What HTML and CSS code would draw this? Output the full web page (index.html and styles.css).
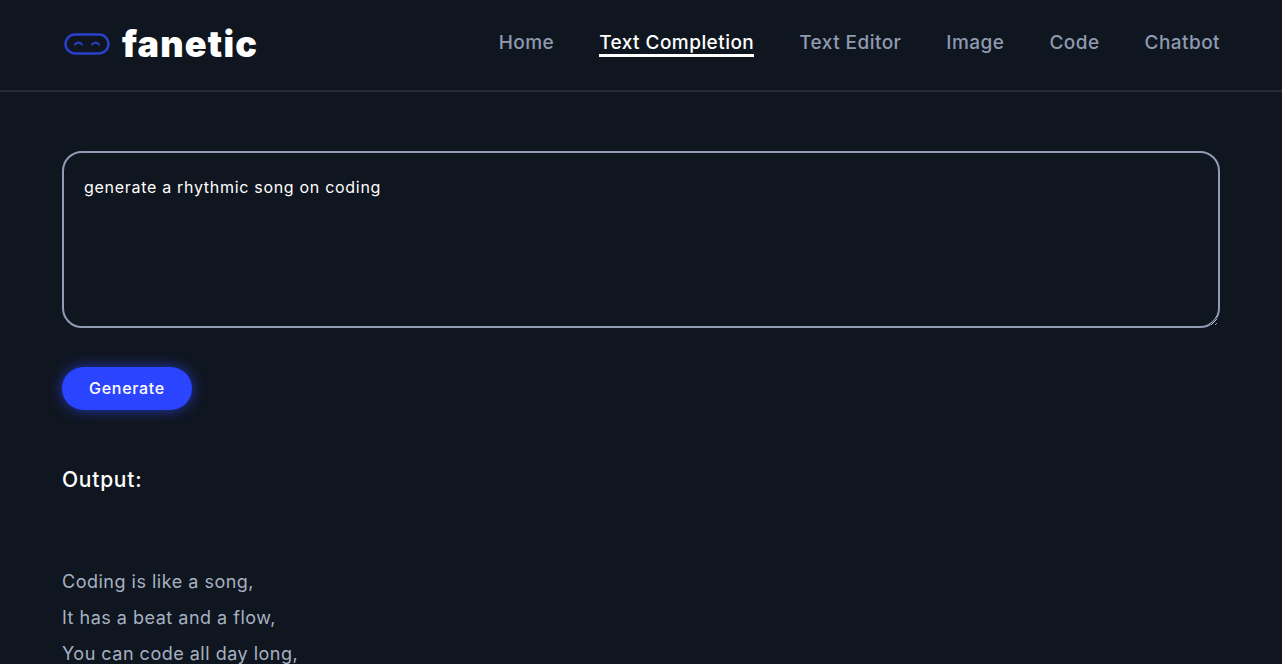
FILE: index.html
```html
<!DOCTYPE html>
<html lang="en">
<head>
<meta charset="utf-8">
<title>fanetic</title>
<link rel="stylesheet" href="styles.css">
</head>
<body>
<header class="header">
  <a class="brand" href="#">
    <svg class="brand-icon" width="46" height="22" viewBox="0 0 46 22" fill="none" stroke="#2a40d0" stroke-width="2.400">
      <rect x="1.500" y="1.500" width="43" height="19" rx="9.500"/>
      <path d="M11 11.500c1.800-2.800 5.200-2.800 7 0" stroke-linecap="round" stroke-width="2"/>
      <path d="M28 11.500c1.800-2.800 5.200-2.800 7 0" stroke-linecap="round" stroke-width="2"/>
    </svg>
    <span class="brand-name">fanetic</span>
  </a>
  <nav class="nav">
    <a class="nav-link" href="#">Home</a>
    <a class="nav-link active" href="#">Text Completion</a>
    <a class="nav-link" href="#">Text Editor</a>
    <a class="nav-link" href="#">Image</a>
    <a class="nav-link" href="#">Code</a>
    <a class="nav-link" href="#">Chatbot</a>
  </nav>
</header>
<main class="main">
  <textarea class="prompt">generate a rhythmic song on coding</textarea>
  <button class="generate" type="button">Generate</button>
  <h2 class="output-title">Output:</h2>
  <div class="output">
    <p>Coding is like a song,</p>
    <p>It has a beat and a flow,</p>
    <p>You can code all day long,</p>
  </div>
</main>
</body>
</html>
```
FILE: styles.css
```css
* { box-sizing: border-box; }
html, body { height: 100%; overflow: hidden; }
body {
  margin: 0;
  background: #10161f;
  font-family: Inter, "Liberation Sans", sans-serif;
  color: #fff;
}
.header {
  height: 92px;
  padding: 0 62px;
  display: flex;
  align-items: center;
  justify-content: space-between;
  border-bottom: 2px solid #252b35;
}
.brand {
  display: flex;
  align-items: center;
  gap: 12px;
  margin-left: 2px;
  color: #fff;
  text-decoration: none;
}
.brand-icon { margin-top: -3px; }
.brand-name {
  font-size: 36px;
  font-weight: 900;
  line-height: 36px;
  letter-spacing: 1.200px;
  margin-top: -2px;
}
.nav { display: flex; gap: 45px; margin-top: -2px; }
.nav-link {
  font-size: 19px;
  font-weight: 500;
  line-height: 22px;
  letter-spacing: 0.450px;
  color: #8e9ab0;
  text-decoration: none;
  border-bottom: 3px solid transparent;
}
.nav-link.active { color: #fff; border-bottom-color: #fff; }
.main { padding: 59px 62px 0; }
.prompt {
  display: block;
  width: 100%;
  height: 177px;
  padding: 22px 20px;
  background: transparent;
  border: 2px solid #909cb4;
  border-radius: 20px;
  color: #fff;
  font-family: inherit;
  font-size: 16px;
  line-height: 24px;
  letter-spacing: 0.700px;
  outline: none;
}
.generate {
  display: block;
  width: 130px;
  height: 43px;
  margin-top: 39px;
  padding: 0 0 2px;
  border: 0;
  border-radius: 22px;
  background: #2b44ff;
  box-shadow: 0 0 14px rgba(43, 68, 255, 0.7);
  color: #fff;
  font-family: inherit;
  font-size: 16px;
  font-weight: 500;
  letter-spacing: 0.700px;
}
.output-title {
  margin: 57px 0 0;
  font-size: 21px;
  font-weight: 500;
  line-height: 26px;
  letter-spacing: 0.750px;
}
.output { margin-top: 71px; }
.output p {
  margin: 0;
  font-size: 18px;
  line-height: 36px;
  letter-spacing: 0.500px;
  color: #a6b1c2;
}
```
